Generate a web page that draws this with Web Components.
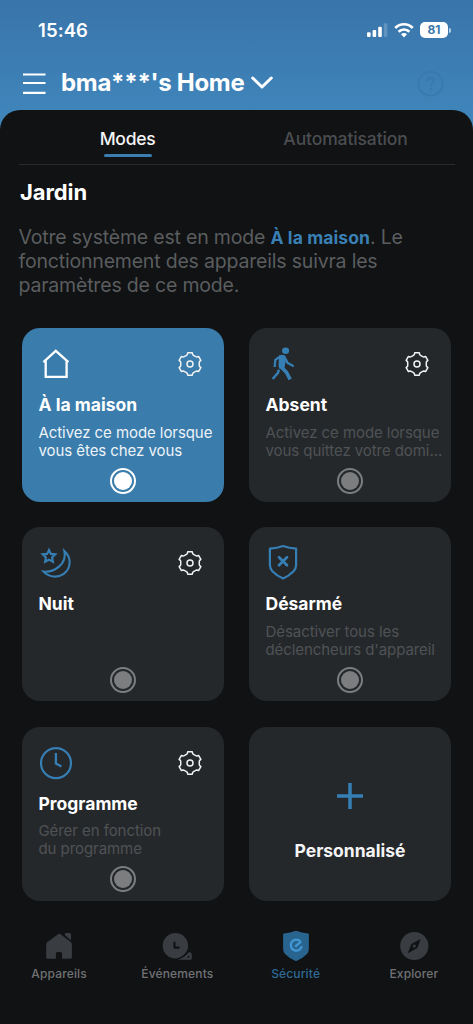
<!DOCTYPE html>
<html lang="fr">
<head>
<meta charset="utf-8">
<meta name="viewport" content="width=device-width">
<title>Sécurité</title>
<style>
  html, body { margin: 0; height: 100%; background: #101214; }
  body { font-family: Inter, "Liberation Sans", sans-serif; color: #fff; overflow: hidden; }
</style>
</head>
<body>
<security-app></security-app>
<script>
const gearPath = (() => {
  const tooth = [[-3.5, -8.7], [-2.7, -9.4], [-2.3, -11.2], [2.3, -11.2], [2.7, -9.4], [3.5, -8.7]];
  let d = '';
  for (let i = 0; i < 6; i++) {
    const a = i * Math.PI / 3;
    tooth.forEach(([x, y], j) => {
      const px = (12 + x * Math.cos(a) - y * Math.sin(a)).toFixed(2);
      const py = (12 + x * Math.sin(a) + y * Math.cos(a)).toFixed(2);
      d += (i + j ? 'L' : 'M') + px + ' ' + py;
    });
  }
  return d + 'Z';
})();

const icons = {
  menu: [24, 24, '<path d="M1 3.500h22.500M1 12h22.500M1 21.800h22.500" stroke="#fff" stroke-width="2.200"/>'],
  chevron: [24, 16, '<path d="M2.700 3 12 12l9.300-9" fill="none" stroke="#fff" stroke-width="3" stroke-linecap="round" stroke-linejoin="round"/>'],
  help: [26, 26, '<g fill="none" stroke="#3a79ab" stroke-width="1.800"><circle cx="13.500" cy="13.700" r="12"/><path d="M10.300 11.300c0-2 1.300-3.300 3.200-3.300s3.300 1.200 3.300 3c0 2.200-3.200 2.600-3.200 5.200M13.600 17.900v2.200" stroke-width="2"/></g>'],
  signal: [22, 16, '<g fill="#fff"><rect x="1" y="10.300" width="3.600" height="4.700" rx="1"/><rect x="6.600" y="7.900" width="3.600" height="7.100" rx="1"/><rect x="12.200" y="4.800" width="3.600" height="10.200" rx="1"/><rect x="17.800" y="1.300" width="3.600" height="13.700" rx="1" opacity=".2"/></g>'],
  wifi: [20, 16, '<g fill="none" stroke="#fff" stroke-width="2.600"><path d="M1.200 6c5-5 12.600-5 17.600 0"/><path d="M4.600 9.700c3.100-3 7.700-3 10.800 0"/></g><path d="M7 12.300c1.800-1.600 4.200-1.600 6 0l-3 3.200z" fill="#fff"/>'],
  gear: [24, 24, `<g fill="none" stroke="#f2f2f2" stroke-width="1.500" stroke-linejoin="round"><path d="${gearPath}"/><circle cx="12" cy="12" r="3"/></g>`],
  home: [32, 32, '<path d="M3.400 14.200 15.800 2.800l12.600 11.400M5.700 12.500v16.400h20.900V12.500" fill="none" stroke="#fff" stroke-width="2.300"/>'],
  walk: [32, 32, '<ellipse cx="18.600" cy="2.700" rx="3.500" ry="3.200" fill="currentColor"/><g fill="none" stroke="currentColor" stroke-linejoin="round"><path d="M13.500 8.200 8.300 11.900 7.700 19M17.800 9.500l2.900 5.600 6 3.200" stroke-width="2.300"/><path d="M12 21.700 10.800 25 5.600 31" stroke-width="2.500"/><path d="m14.600 19.500 4.700 4.600 3.900 7.300" stroke-width="3.600"/></g><path d="M12 7.600q3.200-1.700 6.600.4l.4 3.500-1.600 8.700-4.900.8-1-3z" fill="currentColor"/>'],
  moon: [32, 32, '<g fill="none" stroke="currentColor" stroke-width="2.100"><path d="m9 2.900 1.900 4 4.400.5-3.200 3 .8 4.300L9 12.600l-3.900 2.100.8-4.300-3.200-3 4.400-.5z"/><path d="M24.400 4c7.300 6.500 6.900 17.400-.7 22.900-6.400 4.500-15 3.200-20.200-2.300C14.800 25.600 27.200 16.600 24.400 4z"/></g>'],
  shield: [32, 32, '<g fill="none" stroke="currentColor" stroke-width="2.200" stroke-linejoin="round"><path d="M2.900 1.700Q10 1 16.100-1q6 2 13 2.700V18q0 3.500-2.500 6.200Q22 28.900 16.100 31.500 10 28.900 5.400 24.200 2.900 21.500 2.900 18z"/><path d="m12 10.300 8 8M20 10.300l-8 8" stroke-width="2.700" stroke-linecap="round"/></g>'],
  clock: [32, 32, '<g fill="none" stroke="currentColor" stroke-width="2.200"><circle cx="16" cy="16.200" r="15"/><path d="M15.900 6v10.600l5.500 3" stroke-width="2.300"/></g>'],
  plus: [28, 28, '<path d="M14 1v26M1 14h26" stroke="currentColor" stroke-width="3.500"/>'],
  devices: [32, 32, '<path fill="currentColor" d="M3.200 14.200Q3.200 13 4.200 12.200L14.800 4.400q1.500-1.100 3 0l10 7.500q1.100.8 1.100 2.100v13.200q0 1.500-1.500 1.500h-8.300V23.500q0-1.500-1.500-1.500h-3.200q-1.500 0-1.500 1.500v5.200H4.700q-1.500 0-1.500-1.500zM21.800 5V4.200q0-1.200 1.200-1.200h3.500Q28 3 28 4.500v6z"/>'],
  events: [32, 32, '<circle cx="14.400" cy="15.700" r="12.700" fill="currentColor"/><path fill="currentColor" d="M17 29.700q7-2.500 11-7.700 2.800.4 2.800 3.500v2.700q0 1.500-1.500 1.500z"/><circle cx="27.500" cy="26.700" r="1" fill="#101214"/><path d="M27.100 19.800q-3.200 6.500-10 9" stroke="#101214" stroke-width=".8" fill="none"/><path d="M13.500 11.800v5.800h5" fill="none" stroke="#101214" stroke-width="2.100" stroke-linejoin="round"/>'],
  security: [32, 32, '<path fill="#29648f" d="M4 3.600Q10 3.100 16 .8q6 2.300 12 2.800.9 0 .9 1V19q0 3-2.200 5.200-4.500 4.600-10.700 7.100-6.200-2.500-10.700-7.100Q3.100 22 3.100 19V4.600q0-1 .9-1z"/><path d="M20.400 11.500a5.500 5.500 0 1 0 1.300 4.700M15.200 16.700l6-5.300" fill="none" stroke="#4298d4" stroke-width="2.300"/>'],
  explore: [32, 32, '<circle cx="16.300" cy="16" r="14.100" fill="currentColor"/><path d="m22.700 8.900-3.400 9.100-9.500 5.200 3.500-9.200z" fill="#101214"/><circle cx="16.300" cy="16" r="1.600" fill="currentColor"/>']
};

const define = (name, render) => customElements.define(name, class extends HTMLElement {
  connectedCallback() {
    if (this.shadowRoot) return;
    const tpl = document.createElement('template');
    tpl.innerHTML = render(this);
    this.attachShadow({ mode: 'open' }).append(tpl.content.cloneNode(true));
  }
});

define('ui-icon', el => {
  const [w, h, body] = icons[el.getAttribute('name')];
  return `<style>:host{display:block;flex:none;width:${w}px;height:${h}px}svg{display:block;overflow:visible}</style>
  <svg width="${w}" height="${h}" viewBox="0 0 ${w} ${h}">${body}</svg>`;
});

define('battery-level', () => `<style>
  :host{display:flex;align-items:center;gap:1px}
  .body{width:28px;height:16px;border-radius:5px;background:#fff;color:#3a78ac;font-size:12px;font-weight:700;line-height:16px;text-align:center}
  .cap{width:2px;height:5px;border-radius:0 2px 2px 0;background:#b5cfe3}
</style><div class="body"><slot></slot></div><div class="cap"></div>`);

define('status-bar', () => `<style>
  :host{display:flex;align-items:center;height:60px;box-sizing:border-box;padding:0 22px 0 38px}
  .time{font-size:18.500px;font-weight:600;letter-spacing:.1px;margin-right:auto}
  .right{display:flex;align-items:center;gap:6px}
</style><div class="time">15:46</div>
<div class="right"><ui-icon name="signal"></ui-icon><ui-icon name="wifi"></ui-icon><battery-level>81</battery-level></div>`);

define('home-header', () => `<style>
  :host{display:flex;align-items:center;height:46px;padding:0 30px 4px 22px}
  h1{margin:0 5.500px 0 15px;font-size:24px;line-height:30px;font-weight:700;letter-spacing:-.28px}
  .help{margin-left:auto}
</style><ui-icon name="menu"></ui-icon><h1><slot></slot></h1><ui-icon name="chevron"></ui-icon><ui-icon class="help" name="help"></ui-icon>`);

define('mode-tab', () => `<style>
  :host{flex:1;display:flex;flex-direction:column;align-items:center;font-size:17.500px;line-height:24px;font-weight:500;letter-spacing:-.12px;color:#4b4d50}
  :host([selected]){color:#f4f4f5;letter-spacing:-.3px}
  i{width:48px;height:3.500px;border-radius:2px;margin-top:3px}
  :host([selected]) i{background:#3a7dae}
</style><slot></slot><i></i>`);

define('mode-tabs', () => `<style>
  :host{display:flex;height:55px;box-sizing:border-box;margin:0 18.500px;padding-top:16.500px;border-bottom:1px solid #292b2d}
</style><slot></slot>`);

define('mode-radio', () => `<style>
  :host{display:grid;place-items:center;box-sizing:border-box;width:26px;height:26px;border:2px solid currentColor;border-radius:50%}
  i{width:18px;height:18px;border-radius:50%;background:currentColor}
</style><i></i>`);

define('mode-card', el => `<style>
  :host{display:flex;flex-direction:column;box-sizing:border-box;height:174px;border-radius:18px;background:#25282b;padding:20px 9px 8.500px 16.500px}
  :host([selected]){background:#3a7cab}
  .top{display:flex;justify-content:space-between;height:32px;padding:0 13.500px 0 1.500px;color:#367fb5}
  .top .gear{margin-top:4px}
  h3{margin:13px 0 0;font-size:17.500px;line-height:24px;font-weight:700}
  p{margin:6.500px -8px 0 0;font-size:15px;line-height:18px;color:#4f5255;white-space:pre-line;letter-spacing:-.07px}
  :host([selected]) p{color:#edf3f8}
  mode-radio{margin:auto 7.500px 0 0;align-self:center;color:#7b7d7f}
  :host([selected]) mode-radio{color:#fff}
</style><div class="top"><ui-icon name="${el.getAttribute('icon')}"></ui-icon>${el.hasAttribute('configurable') ? '<ui-icon class="gear" name="gear"></ui-icon>' : ''}</div>
<h3><slot name="title"></slot></h3><p><slot></slot></p><mode-radio></mode-radio>`);

define('add-card', () => `<style>
  :host{display:flex;flex-direction:column;align-items:center;box-sizing:border-box;height:174px;border-radius:18px;background:#25282b;padding-top:55.500px;color:#367fb5}
  h3{margin:29px 0 0;font-size:17.500px;line-height:24px;font-weight:700;color:#f4f4f5}
</style><ui-icon name="plus"></ui-icon><h3><slot></slot></h3>`);

define('nav-item', el => `<style>
  :host{flex:1;display:flex;flex-direction:column;align-items:center;gap:4px;color:#393c40}
  span{font-size:12px;line-height:16px;font-weight:500;color:#707275;letter-spacing:.15px}
  :host([selected]) span{color:#2f6a95}
</style><ui-icon name="${el.getAttribute('icon')}"></ui-icon><span><slot></slot></span>`);

define('bottom-nav', () => `<style>:host{display:flex;padding-top:29.500px}</style><slot></slot>`);

define('security-app', () => `<style>
  :host{display:block;width:473px;height:1024px;overflow:hidden;background:linear-gradient(#3974aa,#4088bd 132px)}
  main{height:914px;border-radius:20px 20px 0 0;background:#101214}
  h2{margin:12.500px 0 0 20px;font-size:22px;line-height:28px;font-weight:700;letter-spacing:-.1px}
  .status{margin:19.500px 0 0 18.500px;font-size:19.500px;line-height:24px;letter-spacing:-.19px;color:#5b5d5f}
  .status b{color:#3a80b4;font-size:17.500px;font-weight:700;letter-spacing:.08px}
  .status div{white-space:nowrap;height:24px}
  .grid{display:grid;grid-template-columns:202px 202px;gap:25.300px 25px;margin:31px 0 0 22px}
</style>
<status-bar></status-bar>
<home-header>bma***'s Home</home-header>
<main>
  <mode-tabs><mode-tab selected>Modes</mode-tab><mode-tab>Automatisation</mode-tab></mode-tabs>
  <h2>Jardin</h2>
  <div class="status"><div>Votre système est en mode <b>À la maison</b>. Le</div><div>fonctionnement des appareils suivra les</div><div>paramètres de ce mode.</div></div>
  <section class="grid">
    <mode-card icon="home" selected configurable><span slot="title">À la maison</span>Activez ce mode lorsque<br>vous êtes chez vous</mode-card>
    <mode-card icon="walk" configurable><span slot="title">Absent</span>Activez ce mode lorsque<br>vous quittez votre domi...</mode-card>
    <mode-card icon="moon" configurable><span slot="title">Nuit</span></mode-card>
    <mode-card icon="shield"><span slot="title">Désarmé</span>Désactiver tous les<br>déclencheurs d'appareil</mode-card>
    <mode-card icon="clock" configurable><span slot="title">Programme</span>Gérer en fonction<br>du programme</mode-card>
    <add-card>Personnalisé</add-card>
  </section>
  <bottom-nav>
    <nav-item icon="devices">Appareils</nav-item>
    <nav-item icon="events">Événements</nav-item>
    <nav-item icon="security" selected>Sécurité</nav-item>
    <nav-item icon="explore">Explorer</nav-item>
  </bottom-nav>
</main>`);
</script>
</body>
</html>
